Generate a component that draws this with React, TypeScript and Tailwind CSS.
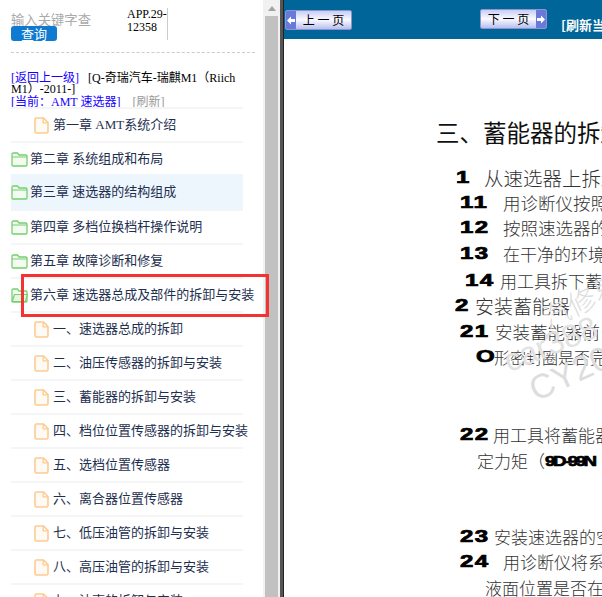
import React from "react";

const cjk = "font-['Liberation_Serif','Noto_Sans_CJK_SC',serif]";

function FileIcon() {
  return (
    <svg width="15" height="17" viewBox="0 0 15 17" fill="none" className="shrink-0">
      <path d="M2.5 1H9.5L14 5.5V14.5C14 15.3 13.3 16 12.5 16H2.5C1.7 16 1 15.3 1 14.5V2.5C1 1.7 1.7 1 2.5 1Z" fill="#fffaf3" stroke="#fdcb93" strokeWidth="1.6" />
      <path d="M9.2 1V5.8H14" stroke="#fdcb93" strokeWidth="1.3" />
    </svg>
  );
}

function FolderIcon({ open }: { open?: boolean }) {
  return (
    <svg width="17" height="15" viewBox="0 0 17 15" fill="none" className="shrink-0">
      <path d="M1 13V2.2C1 1.5 1.5 1 2.2 1H6.5L8 3H14.8C15.5 3 16 3.5 16 4.2V13C16 13.6 15.5 14 15 14H2C1.4 14 1 13.6 1 13Z" fill="#f4fbf2" stroke="#74d06e" strokeWidth="1.3" />
      {open ? (
        <path d="M1.2 13.5L3.5 6.5H16.3L14.5 13.5Z" fill="#e6f6e2" stroke="#74d06e" strokeWidth="1.2" />
      ) : (
        <path d="M1 5H16" stroke="#74d06e" strokeWidth="1" />
      )}
    </svg>
  );
}

const rows: { t: string; k: "file" | "folder" | "open"; hl?: boolean }[] = [
  { t: "第一章 AMT系统介绍", k: "file" },
  { t: "第二章 系统组成和布局", k: "folder" },
  { t: "第三章 速选器的结构组成", k: "folder", hl: true },
  { t: "第四章 多档位换档杆操作说明", k: "folder" },
  { t: "第五章 故障诊断和修复", k: "folder" },
  { t: "第六章 速选器总成及部件的拆卸与安装", k: "open" },
  { t: "一、速选器总成的拆卸", k: "file" },
  { t: "二、油压传感器的拆卸与安装", k: "file" },
  { t: "三、蓄能器的拆卸与安装", k: "file" },
  { t: "四、档位位置传感器的拆卸与安装", k: "file" },
  { t: "五、选档位置传感器", k: "file" },
  { t: "六、离合器位置传感器", k: "file" },
  { t: "七、低压油管的拆卸与安装", k: "file" },
  { t: "八、高压油管的拆卸与安装", k: "file" },
  { t: "九、油壳的拆卸与安装", k: "file" },
];

function Btn({ label, dir }: { label: string; dir: "l" | "r" }) {
  const arrow = (
    <div className="w-[10px] self-stretch bg-[#6a78dc] flex items-center justify-center">
      <svg width="8" height="9" viewBox="0 0 8 9">
        <path d={dir === "l" ? "M0 4.5L4 0.5V3H8V6H4V8.5Z" : "M8 4.5L4 0.5V3H0V6H4V8.5Z"} fill="#fff" />
      </svg>
    </div>
  );
  return (
    <div className="w-[67px] h-[20px] flex items-stretch rounded-[2px] border border-[#8c96c8] bg-gradient-to-b from-[#c8cdf6] via-[#fafaff] to-[#b8bef0] overflow-hidden">
      {dir === "l" && arrow}
      <div className="flex-1 flex items-center justify-center text-[12px] leading-none text-black font-['Noto_Sans_CJK_SC',sans-serif] whitespace-pre">
        {label}
      </div>
      {dir === "r" && arrow}
    </div>
  );
}

const num = "font-['Liberation_Sans',sans-serif] font-black text-black inline-block origin-left [-webkit-text-stroke:0.7px_black]";
const cn = "text-[#333] font-['Noto_Sans_CJK_SC',sans-serif] font-light";

function Line({ n, t, cls, w = "w-[14px]", size = "text-[17px]" }: { n?: string; t: string; cls: string; w?: string; size?: string }) {
  return (
    <div className={`${cls} h-[20px] flex items-center whitespace-nowrap leading-[20px] ${size}`}>
      {n && (
        <span className={`${num} ${w} text-[16px] tracking-[1px] scale-x-150 shrink-0`}>{n}</span>
      )}
      <span className={cn}>{t}</span>
    </div>
  );
}

export default function App() {
  return (
    <div className={`relative w-[602px] h-[597px] flex overflow-hidden bg-white ${cjk}`}>
      <div className="w-[263px] shrink-0 h-full overflow-hidden pl-[11px] flex flex-col">
        <div className="h-[41px] pt-[9px] flex shrink-0">
          <div className="w-[116px] flex flex-col">
            <div className="text-[13.33px] leading-[22px] h-[18px] text-[#aaa] font-['Noto_Sans_CJK_SC',sans-serif] whitespace-nowrap overflow-hidden">输入关键字查</div>
            <div className="w-[46px] h-[15px] rounded-[3px] bg-[#0f7ad0] text-white text-[13px] leading-[15px] text-center font-['Noto_Sans_CJK_SC',sans-serif]">查询</div>
          </div>
          <div className="w-[41px] border-r border-[#ccc] text-[12px] leading-[13px] text-black h-[32px] break-all -mt-[1px]">APP.29-12358</div>
        </div>
        <div className="w-[244px] border-t border-dashed border-[#ccc] mt-[11px] shrink-0" />
        <div className="mt-[20px] w-[232px] text-[12px] leading-[11px] text-black shrink-0">
          <span className="text-[#1500ff]">[返回上一级]</span>&nbsp;&nbsp; [Q-奇瑞汽车-瑞麒M1（Riich M1）-2011-]
          <div className="leading-[13px] mt-[1px]">
            <span className="text-[#1500ff]">[当前：AMT 速选器]</span>&nbsp;&nbsp;&nbsp; <span className="text-[#999]">[刷新]</span>
          </div>
        </div>
        <div className="w-[232px] flex flex-col shrink-0 -mt-[2px]">
          {rows.map((r) => (
            <div
              key={r.t}
              className={`shrink-0 flex items-center text-[13px] text-[#1e2f50] whitespace-nowrap font-['Liberation_Serif','Noto_Sans_CJK_SC',sans-serif] ${r.hl ? "h-[36px] -my-[1px] relative bg-[#edf6fd]" : "h-[34px] border-t-2 border-[#f5f5f5]"} ${r.k === "file" ? "pl-[23px] gap-[4px]" : "gap-[2px]"}`}
            >
              {r.k === "file" ? <FileIcon /> : <FolderIcon open={r.k === "open"} />}
              <span>{r.t}</span>
            </div>
          ))}
        </div>
      </div>

      <div className="w-[17px] shrink-0 h-full flex flex-col bg-[#f1f1f1]">
        <div className="h-[16px] flex items-center justify-center shrink-0">
          <svg width="8" height="5" viewBox="0 0 8 5"><path d="M4 0L8 5H0Z" fill="#a3a3a3" /></svg>
        </div>
        <div className="flex-1 w-[13px] bg-[#c1c1c1] ml-[2px]" />
      </div>
      <div className="w-[4px] shrink-0 h-full bg-[#555] border-r border-[#222]" />

      <div className="flex-1 min-w-0 h-full relative overflow-hidden flex flex-col">
        <div className="h-[39px] bg-[#006699] shrink-0 flex items-start pl-[1px] relative">
          <div className="mt-[10px]"><Btn label="上 一 页" dir="l" /></div>
          <div className="mt-[9px] ml-[128px]"><Btn label="下 一 页" dir="r" /></div>
          <div className="mt-[17px] ml-[14px] text-white text-[13px] leading-[15px] font-bold whitespace-nowrap font-['Noto_Sans_CJK_SC',sans-serif]">[刷新当前页]</div>
        </div>

        <div className="flex-1 flex flex-col pl-[152px] whitespace-nowrap">
          <div className="h-[26px] mt-[80px] text-[23.5px] leading-[26px] text-[#111] font-['Noto_Sans_CJK_SC',sans-serif]">三、蓄能器的拆卸与安装</div>
          <Line cls="mt-[23px] ml-[20px]" n="1" w="w-[28px]" size="text-[19.5px]" t="从速选器上拆卸蓄能器" />
          <Line cls="mt-[5px] ml-[24px]" n="11" w="w-[43px]" size="text-[17.5px]" t="用诊断仪按照系统" />
          <Line cls="mt-[5px] ml-[24px]" n="12" w="w-[43px]" size="text-[17.5px]" t="按照速选器的拆卸" />
          <Line cls="mt-[6px] ml-[24px]" n="13" w="w-[43px]" t="在干净的环境中" />
          <Line cls="mt-[7px] ml-[29px]" n="14" w="w-[35px]" t="用工具拆下蓄能器" />
          <Line cls="mt-[5px] ml-[19px]" n="2" w="w-[20px]" size="text-[19px]" t="安装蓄能器" />
          <Line cls="mt-[6px] ml-[24px]" n="21" w="w-[35px]" size="text-[17.5px]" t="安装蓄能器前，检查" />
          <Line cls="mt-[5px] ml-[40px]" n="O" w="w-[18px]" size="text-[16px]" t="形密封圈是否完好" />
          <Line cls="mt-[58px] ml-[24px]" n="22" w="w-[33px]" t="用工具将蓄能器" />
          <div className="mt-[6px] ml-[41px] h-[20px] flex items-center text-[17px] leading-[20px]">
            <span className={cn}>定力矩（</span>
            <span className={`${num} text-[15px] tracking-[-2px] scale-x-125`}>9D-99N</span>
          </div>
          <Line cls="mt-[56px] ml-[24px]" n="23" w="w-[34px]" t="安装速选器的空" />
          <Line cls="mt-[5px] ml-[24px]" n="24" w="w-[43px]" t="用诊断仪将系统" />
          <Line cls="mt-[6px] ml-[49px]" t="液面位置是否在" />
        </div>

        <div className="absolute left-[255px] top-[286px] -rotate-[25deg] text-[#ddd] text-[28px] leading-none whitespace-nowrap font-['Noto_Sans_CJK_SC',sans-serif] font-light">汽修易</div>
        <div className="absolute left-[215px] top-[315px] -rotate-[22deg] text-[#e2e2e2] text-[32px] leading-none whitespace-nowrap font-['Liberation_Sans',sans-serif]">car388.com</div>
        <div className="absolute left-[243px] top-[356px] -rotate-[25deg] text-[#ddd] text-[34px] leading-none whitespace-nowrap font-['Liberation_Sans',sans-serif]">CY20</div>
      </div>

      <div className="absolute left-[21px] top-[274px] w-[248px] h-[43px] border-[3px] border-[#f43232]" />
    </div>
  );
}
